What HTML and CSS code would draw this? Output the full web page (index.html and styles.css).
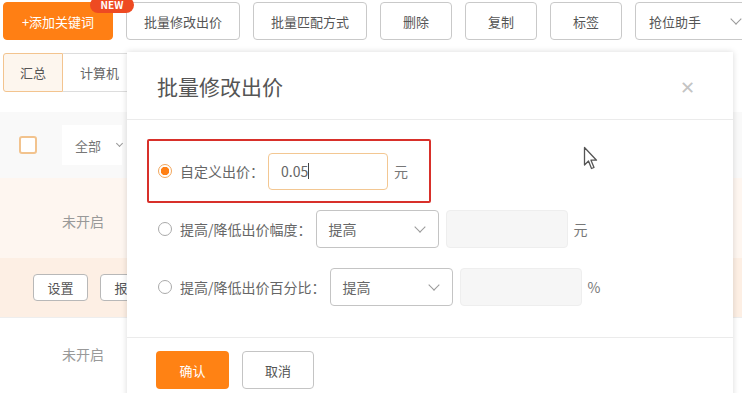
FILE: index.html
```html
<!DOCTYPE html>
<html lang="zh-CN">
<head>
<meta charset="UTF-8">
<meta name="viewport" content="width=device-width, initial-scale=1.0">
<title>批量修改出价</title>
<link rel="stylesheet" href="styles.css">
</head>
<body>

  <div class="toolbar">
    <div class="add-wrap">
      <button class="btn btn-add">+添加关键词</button>
      <span class="badge-new">NEW</span>
    </div>
    <button class="btn btn-w114">批量修改出价</button>
    <button class="btn btn-w114">批量匹配方式</button>
    <button class="btn btn-w72">删除</button>
    <button class="btn btn-w72">复制</button>
    <button class="btn btn-w72">标签</button>
    <div class="btn btn-drop">抢位助手 <span class="chev"></span></div>
  </div>

  <div class="tabs">
    <div class="tab active">汇总</div>
    <div class="tab">计算机</div>
  </div>

  <div class="table">
    <div class="thead">
      <span class="check"></span>
      <div class="filter">全部 <span class="chev small"></span></div>
    </div>
    <div class="row row-a">
      <span class="status">未开启</span>
    </div>
    <div class="row row-b">
      <button class="btn-sm">设置</button>
      <button class="btn-sm">报告</button>
    </div>
    <div class="row row-c">
      <span class="status">未开启</span>
    </div>
  </div>

  <!-- 弹窗 -->
  <div class="modal">
    <div class="modal-head">
      <span class="modal-title">批量修改出价</span>
      <span class="modal-close">&#x2715;</span>
    </div>
    <div class="modal-body">
      <div class="highlight">
        <div class="opt">
          <span class="radio checked"></span>
          <span class="opt-label">自定义出价：</span>
          <div class="input focus">0.05<span class="caret"></span></div>
          <span class="unit">元</span>
        </div>
      </div>
      <div class="opt opt-plain">
        <span class="radio"></span>
        <span class="opt-label">提高/降低出价幅度：</span>
        <div class="select">提高 <span class="chev"></span></div>
        <div class="input disabled"></div>
        <span class="unit">元</span>
      </div>
      <div class="opt opt-plain">
        <span class="radio"></span>
        <span class="opt-label">提高/降低出价百分比：</span>
        <div class="select">提高 <span class="chev"></span></div>
        <div class="input disabled"></div>
        <span class="unit">%</span>
      </div>
    </div>
    <div class="modal-foot">
      <button class="btn-ok">确认</button>
      <button class="btn-cancel">取消</button>
    </div>
  </div>

  <svg class="cursor" width="16" height="26" viewBox="0 0 16 26">
    <path d="M1.5 1.5 L1.5 19 L5.5 15 L8.5 22.5 L11 21.5 L8 14.2 L13.5 14.2 Z" fill="#fff" stroke="#555" stroke-width="1.3" stroke-linejoin="round"/>
  </svg>

</body>
</html>
```
FILE: styles.css
```css
body {
  margin: 0;
  font-family: "Noto Sans CJK SC", "Noto Sans", sans-serif;
  background-color: #fff;
  color: #555;
  width: 742px;
  height: 393px;
  overflow: hidden;
  position: relative;
}

button {
  font-family: inherit;
}

.toolbar {
  display: flex;
  gap: 13px;
  padding: 2px 0 0 3px;
}

.btn {
  height: 38px;
  box-sizing: border-box;
  flex-shrink: 0;
  border: 1px solid #c9c9c9;
  border-radius: 4px;
  background: #fff;
  color: #555;
  font-size: 13px;
  display: flex;
  align-items: center;
  justify-content: center;
  padding: 0;
}

.add-wrap {
  position: relative;
  flex-shrink: 0;
}

.btn-add {
  width: 110px;
  background-color: #ff7f14;
  border-color: #ff7f14;
  color: #fff;
}

.badge-new {
  position: absolute;
  left: 87px;
  top: -5px;
  width: 44px;
  height: 16px;
  border-radius: 8px;
  background-color: #ee4a22;
  color: #fff;
  font-size: 10px;
  font-weight: bold;
  line-height: 16px;
  text-align: center;
}

.btn-w114 { width: 114px; }
.btn-w72 { width: 72px; }

.btn-drop {
  width: 112px;
  justify-content: space-between;
  padding: 0 6px 0 13px;
}

.chev {
  width: 7px;
  height: 7px;
  border-right: 1.3px solid #999;
  border-bottom: 1.3px solid #999;
  transform: rotate(45deg);
  margin-top: -4px;
  display: inline-block;
}

.chev.small {
  width: 4px;
  height: 4px;
}

.tabs {
  display: flex;
  margin: 13px 0 0 3px;
  height: 39px;
}

.tab {
  height: 39px;
  box-sizing: border-box;
  border: 1px solid #ddd;
  border-left: none;
  padding: 0 14px 0 17px;
  font-size: 13px;
  display: flex;
  align-items: center;
  color: #666;
}

.tab.active {
  width: 60px;
  justify-content: center;
  padding: 0;
  border: 1px solid #f3c48f;
  border-radius: 3px 0 0 3px;
  background-color: #fdf6ee;
  color: #555;
}

.table {
  margin-top: 20px;
}

.thead {
  height: 66px;
  background-color: #f9f9f9;
  display: flex;
  align-items: center;
}

.check {
  width: 18px;
  height: 18px;
  box-sizing: border-box;
  border: 2px solid #f2c38e;
  border-radius: 3px;
  margin-left: 19px;
  background: #fff;
}

.filter {
  margin-left: 25px;
  width: 60px;
  height: 40px;
  background: #fff;
  font-size: 13px;
  color: #777;
  display: flex;
  align-items: center;
  padding-left: 13px;
  gap: 16px;
  box-sizing: border-box;
}

.row {
  display: flex;
  align-items: center;
}

.status {
  margin-left: 62px;
  font-size: 14px;
  color: #999;
}

.row-a {
  height: 80px;
  padding-top: 6px;
  box-sizing: border-box;
  background-color: #fef6f0;
}

.row-b {
  height: 59px;
  background-color: #fdefe4;
  gap: 12px;
  padding-left: 33px;
}

.row-c {
  height: 72px;
  border-top: 1px solid #eee;
}

.btn-sm {
  width: 55px;
  height: 27px;
  border: 1px solid #b8b8b8;
  border-radius: 4px;
  background: #fff;
  color: #555;
  font-size: 13px;
  padding: 0;
}

/* 弹窗 */
.modal {
  position: absolute;
  left: 127px;
  top: 52px;
  width: 606px;
  height: 370px;
  background-color: #fff;
  box-shadow: 0 0 6px rgba(0,0,0,.15);
}

.modal-head {
  height: 68px;
  box-sizing: border-box;
  border-bottom: 1px solid #ebebeb;
  display: flex;
  align-items: center;
  justify-content: space-between;
  padding: 0 38px 0 30px;
}

.modal-title {
  font-size: 21px;
  color: #555;
}

.modal-close {
  font-size: 18px;
  color: #c4c4c4;
}

.modal-body {
  padding: 19px 20px 31px;
  display: flex;
  flex-direction: column;
  gap: 20px;
}

.highlight {
  width: 284px;
  height: 64px;
  box-sizing: border-box;
  border: 2px solid #d8302a;
  border-radius: 2px;
  display: flex;
  align-items: center;
  padding-left: 9px;
  margin-bottom: -13px;
}

.opt {
  display: flex;
  align-items: center;
  font-size: 14px;
}

.opt-plain {
  margin-left: 11px;
  height: 38px;
}

.radio {
  width: 14px;
  height: 14px;
  box-sizing: border-box;
  border: 1px solid #aaa;
  border-radius: 50%;
  margin-right: 8px;
  background: #fff;
}

.radio.checked {
  border: 1px solid #f2a65c;
  background: radial-gradient(circle, #ff7f14 0 4px, #fff 4.5px);
}

.opt-label {
  color: #666;
  margin-right: 4px;
}

.input {
  width: 122px;
  height: 38px;
  box-sizing: border-box;
  border-radius: 4px;
  display: flex;
  align-items: center;
  padding-left: 12px;
  font-size: 14px;
  color: #666;
}

.input.focus {
  width: 120px;
  height: 37px;
  border: 1px solid #f3c792;
}

.caret {
  width: 1px;
  height: 16px;
  background: #444;
}

.input.disabled {
  background-color: #f6f6f6;
  border: 1px solid #eee;
  margin-left: 7px;
}

.unit {
  margin-left: 6px;
  color: #777;
}

.select {
  width: 123px;
  height: 38px;
  box-sizing: border-box;
  border: 1px solid #c4c4c4;
  border-radius: 4px;
  display: flex;
  align-items: center;
  justify-content: space-between;
  padding: 0 14px 0 12px;
  color: #666;
}

.modal-foot {
  border-top: 1px solid #ebebeb;
  padding: 13px 0 0 29px;
  display: flex;
  gap: 13px;
}

.btn-ok {
  width: 73px;
  height: 38px;
  border: none;
  border-radius: 4px;
  background-color: #ff8214;
  color: #fff;
  font-size: 13px;
}

.btn-cancel {
  width: 72px;
  height: 38px;
  border: 1px solid #c4c4c4;
  border-radius: 4px;
  background: #fff;
  color: #555;
  font-size: 13px;
}

.cursor {
  position: absolute;
  left: 583px;
  top: 146px;
}
```
